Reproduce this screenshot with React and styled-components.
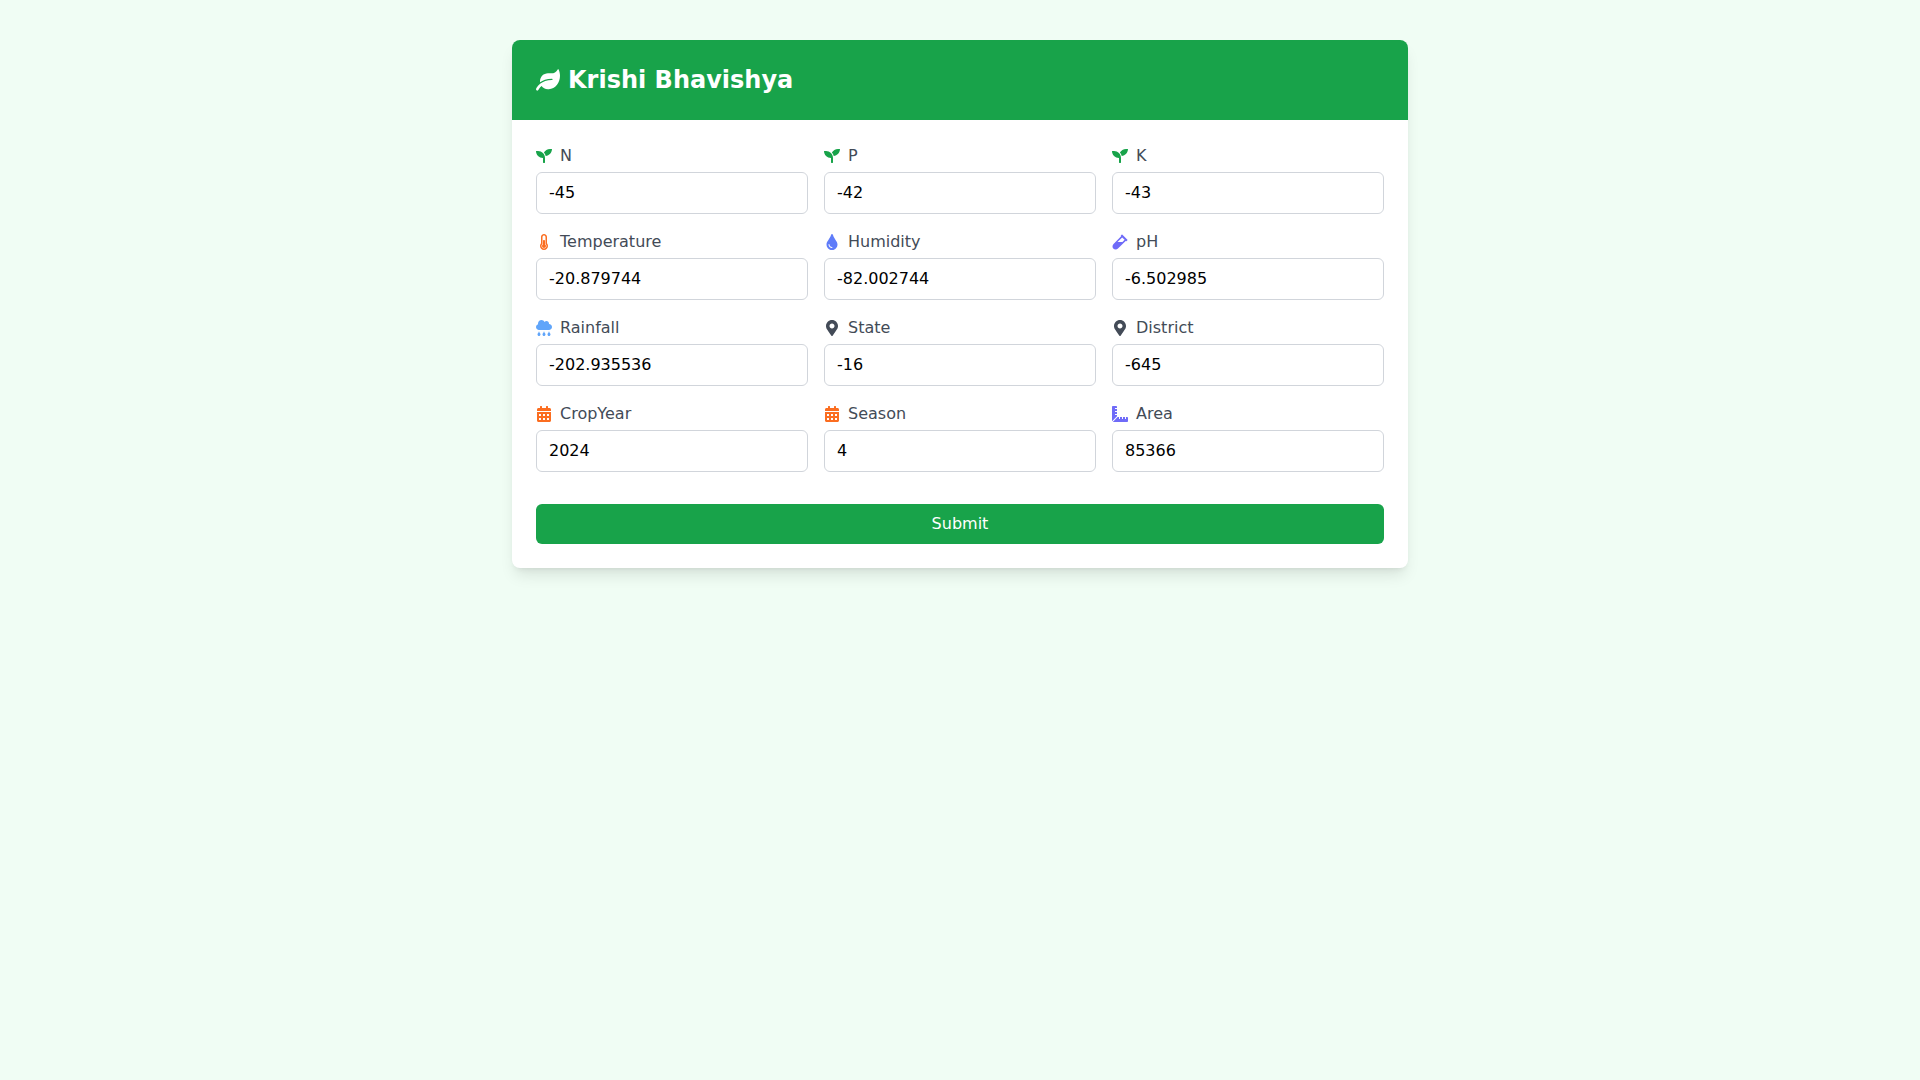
import React, { useState } from "react";
import styled, { createGlobalStyle } from "styled-components";
import {
  FaLeaf,
  FaSeedling,
  FaThermometerHalf,
  FaTint,
  FaVial,
  FaCloudRain,
  FaMapMarkerAlt,
  FaCalendarAlt,
  FaRulerCombined,
} from "react-icons/fa";

const GlobalStyle = createGlobalStyle`
  *, *::before, *::after {
    box-sizing: border-box;
  }
  body {
    margin: 0;
    background: #f0fdf4;
    font-family: "DejaVu Sans", sans-serif;
    font-size: 16px;
    line-height: 24px;
  }
`;

const Page = styled.main`
  min-height: 100vh;
  padding: 40px 16px;
  background: #f0fdf4;
`;

const Card = styled.section`
  max-width: 896px;
  margin: 0 auto;
  overflow: hidden;
  background: #ffffff;
  border-radius: 8px;
  box-shadow: 0 10px 15px -3px rgba(0, 0, 0, 0.1),
    0 4px 6px -4px rgba(0, 0, 0, 0.1);
`;

const CardHeader = styled.header`
  padding: 24px;
  background: #18a34a;
  color: #ffffff;
`;

const Title = styled.h1`
  display: flex;
  align-items: center;
  gap: 8px;
  margin: 0;
  font-size: 24px;
  line-height: 32px;
  font-weight: 700;
`;

const Form = styled.form`
  padding: 24px;
`;

const Fields = styled.div`
  display: grid;
  grid-template-columns: repeat(3, minmax(0, 1fr));
  gap: 16px;

  @media (max-width: 767px) {
    grid-template-columns: minmax(0, 1fr);
  }
`;

const Field = styled.div`
  display: flex;
  flex-direction: column;
  gap: 4px;
`;

const Label = styled.label`
  display: flex;
  align-items: center;
  gap: 8px;
  color: #434b57;

  svg {
    color: ${(props) => props.$tint};
  }
`;

const Input = styled.input`
  width: 100%;
  padding: 8px 12px;
  border: 1px solid #d1d5db;
  border-radius: 6px;
  background: #ffffff;
  color: #000000;
  font: inherit;

  &:focus {
    outline: 2px solid #22c55e;
  }
`;

const SubmitButton = styled.button`
  width: 100%;
  margin-top: 32px;
  padding: 8px 16px;
  border: 0;
  border-radius: 6px;
  background: #18a34a;
  color: #ffffff;
  font: inherit;
  cursor: pointer;

  &:hover {
    background: #15803d;
  }
`;

const fields = [
  { name: "N", value: "-45", icon: FaSeedling, tint: "#18a34a" },
  { name: "P", value: "-42", icon: FaSeedling, tint: "#18a34a" },
  { name: "K", value: "-43", icon: FaSeedling, tint: "#18a34a" },
  { name: "Temperature", value: "-20.879744", icon: FaThermometerHalf, tint: "#fb6d20" },
  { name: "Humidity", value: "-82.002744", icon: FaTint, tint: "#5f7cf9" },
  { name: "pH", value: "-6.502985", icon: FaVial, tint: "#6f6bf8" },
  { name: "Rainfall", value: "-202.935536", icon: FaCloudRain, tint: "#60a5fa" },
  { name: "State", value: "-16", icon: FaMapMarkerAlt, tint: "#434b57" },
  { name: "District", value: "-645", icon: FaMapMarkerAlt, tint: "#434b57" },
  { name: "CropYear", value: "2024", icon: FaCalendarAlt, tint: "#fb6d20" },
  { name: "Season", value: "4", icon: FaCalendarAlt, tint: "#fb6d20" },
  { name: "Area", value: "85366", icon: FaRulerCombined, tint: "#6f6bf8" },
];

const initialValues = Object.fromEntries(fields.map((f) => [f.name, f.value]));

export default function App() {
  const [values, setValues] = useState(initialValues);

  const handleChange = (event) => {
    const { name, value } = event.target;
    setValues((current) => ({ ...current, [name]: value }));
  };

  return (
    <>
      <GlobalStyle />
      <Page>
        <Card>
          <CardHeader>
            <Title>
              <FaLeaf aria-hidden="true" />
              Krishi Bhavishya
            </Title>
          </CardHeader>
          <Form onSubmit={(event) => event.preventDefault()}>
            <Fields>
              {fields.map(({ name, value, icon: Icon, tint }) => (
                <Field key={name}>
                  <Label htmlFor={name} $tint={tint}>
                    <Icon aria-hidden="true" />
                    {name}
                  </Label>
                  <Input
                    id={name}
                    name={name}
                    type="text"
                    placeholder={value}
                    value={values[name]}
                    onChange={handleChange}
                  />
                </Field>
              ))}
            </Fields>
            <SubmitButton type="submit">Submit</SubmitButton>
          </Form>
        </Card>
      </Page>
    </>
  );
}
